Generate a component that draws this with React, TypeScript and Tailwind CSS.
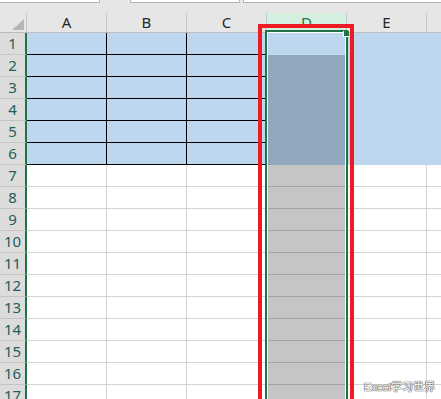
import React from "react";

const COLS = ["A", "B", "C", "D", "E", ""];
const ROWS = Array.from({ length: 17 }, (_, i) => i + 1);

// klasse für eine zelle je nach spalte/zeile
function cellClass(ci: number, r: number) {
  if (ci === 3) {
    if (r === 1) return "bg-[#bdd7ee]";
    if (r <= 6) return "bg-[#91a8bc]";
    return "bg-[#c5c5c5] border-b border-[#a4a4a4]";
  }
  if (r <= 6) {
    if (ci <= 2) return "bg-[#bdd7ee] border-r border-b border-black";
    return "bg-[#bdd7ee]";
  }
  return "bg-white border-r border-b border-[#d4d4d4]";
}

export default function App() {
  return (
    <div
      className="relative h-[399px] w-[441px] overflow-hidden bg-white"
      style={{ fontFamily: '"Noto Sans", "Open Sans", sans-serif' }}
    >
      {/* Reste der Bearbeitungsleiste */}
      <div className="flex h-[3px] bg-[#e6e6e6]">
        <div className="w-[100px] border-b border-r border-[#b4b4b4] bg-white" />
        <div className="w-[30px]" />
        <div className="w-[110px] border-b border-l border-r border-[#b4b4b4] bg-white" />
        <div className="w-[3px]" />
        <div className="flex-1 border-b border-l border-[#b4b4b4] bg-white" />
      </div>
      <div className="h-[10px] bg-[#e6e6e6]" />

      {/* Spaltenköpfe */}
      <div className="flex h-[20px] border-b border-[#bdbdbd] bg-[#e6e6e6]">
        <div className="relative w-[27px] shrink-0 border-r border-[#c8c8c8]">
          <svg className="absolute bottom-[2px] right-[2px]" width="12" height="11" viewBox="0 0 12 11">
            <polygon points="12,0 12,11 0,11" fill="#b5b5b5" />
          </svg>
        </div>
        {COLS.map((c, ci) => (
          <div
            key={ci}
            className={
              "flex w-[80px] shrink-0 items-center justify-center border-r text-[15px] leading-none " +
              (ci === 3
                ? "border-[#c8c8c8] bg-[#d3f0e0] text-[#217346]"
                : "border-[#c8c8c8] text-[#262626]")
            }
          >
            {c}
          </div>
        ))}
      </div>

      {/* Zeilen */}
      {ROWS.map((r) => (
        <div key={r} className="flex h-[22px]">
          <div className="flex w-[27px] shrink-0 items-center justify-center border-b border-r-2 border-b-[#c4c4c4] border-r-[#217346] bg-[#dcdcdc] text-[15px] leading-none text-[#235e57]">
            {r}
          </div>
          {COLS.map((_, ci) => (
            <div key={ci} className={"w-[80px] shrink-0 " + cellClass(ci, r)} />
          ))}
        </div>
      ))}

      {/* Auswahlrahmen */}
      <div className="absolute left-[265px] top-[30px] h-[400px] w-[83px] border-2 border-[#217346] shadow-[inset_0_0_0_1px_white]" />
      <div className="absolute left-[343px] top-[31px] h-[6px] w-[6px] border-b border-l border-white bg-[#217346]" />

      {/* roter Markierungsrahmen */}
      <div className="absolute left-[258px] top-[24px] h-[400px] w-[96px] border-4 border-[#ed1c24]" />

      <div
        className="absolute bottom-[6px] right-[6px] text-[11px] leading-none text-white [text-shadow:0_0_1px_#444,0_0_1px_#444,0_0_1px_#444]"
        style={{ fontFamily: '"Liberation Sans", "Noto Sans CJK SC", sans-serif' }}
      >
        Excel学习世界
      </div>
    </div>
  );
}
